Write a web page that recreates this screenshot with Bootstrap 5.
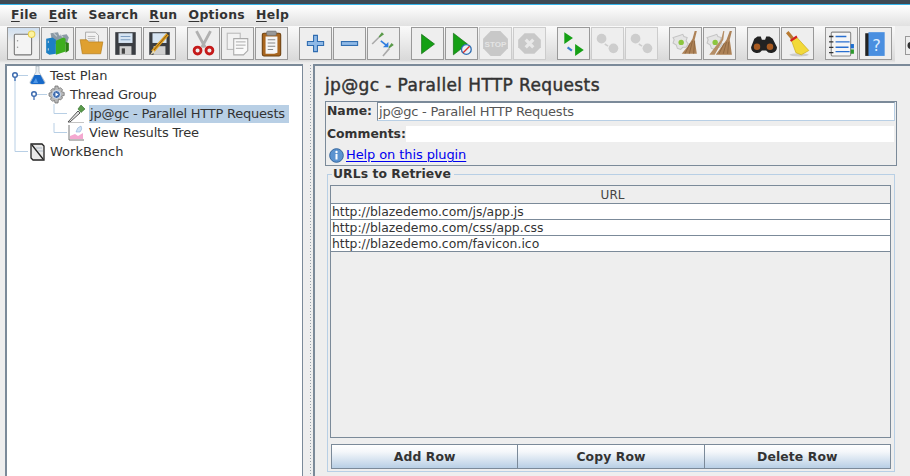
<!DOCTYPE html>
<html lang="en">
<head>
<meta charset="UTF-8">
<title>Apache JMeter</title>
<link href="https://cdn.jsdelivr.net/npm/bootstrap@5.3.0/dist/css/bootstrap.min.css" rel="stylesheet">
<style>
html, body { height: 476px; overflow: hidden; }
body { background: #eeeeee; color: #333; font-family: "DejaVu Sans", sans-serif; font-size: 13px; line-height: 1; }
.title-strip { height: 5px; background: #3f4a54; border-bottom: 1px solid #35b4ea; }
.menu-strip { height: 21px; padding-left: 11px; gap: 11.1px; background: linear-gradient(#ffffff, #e1e1e1); font-weight: 700; font-size: 12.4px; color: #333; letter-spacing: .3px; }
.menu-strip u { text-underline-offset: 2px; }
.tool-wrap { height: 37px; }
.tool-strip { height: 37px; width: 895px; padding: 1px 0 0 7px; background: linear-gradient(#fafafa, #d9d9d9 92%, #eeeeee); }
.tool-grp { gap: 1px; margin-right: 11px; }
.tool-btn { width: 33px; height: 33px; background: #eeeeee; border: 1px solid #999; }
.tool-btn.off { border-color: #ccc; }
.tool-btn.first { background: linear-gradient(#cfdff0, #eeeeee 45%); }
.tool-btn svg { width: 27px; height: 27px; display: block; }
.tool-peek { display: block; margin: 10px 0 0 10px; }
.work-area { height: 413px; padding-top: 1px; }
.tree-pane { width: 298px; margin-left: 5px; background: #fff; border: 2px solid #7b8a99; border-right-width: 1px; border-bottom: 0; color: #333; }
.tree-line { height: 19px; }
.tree-line svg { flex: none; display: block; }
.tree-line .tree-ico { width: 19px; height: 19px; }
.tree-text { margin-left: 3px; padding: 2px 3px 3px 0; white-space: nowrap; }
.tree-text.snug { letter-spacing: -.23px; margin-left: 4px; }
.tree-text.snug-left { letter-spacing: -.2px; margin-left: 3px; }
.tree-text.picked { background: #b8cfe5; padding-left: 1px; margin-left: 3px; padding-right: 4px; letter-spacing: -.23px; }
.split-bar { width: 10px; background-image: radial-gradient(#98a2ab 0.7px, transparent 0.9px); background-size: 3px 3px; background-position: 0 0; background-clip: content-box; padding: 0 1px 0 5px; }
.form-pane { flex: 1; background: #eeeeee; border-top: 2px solid #7b8a99; border-left: 2px solid #7b8a99; padding: 10px 13px 0 10px; }
.pane-title { font-size: 17px; font-weight: 400; -webkit-text-stroke: .45px #333; height: 19px; color: #333; letter-spacing: .37px; margin-bottom: 6px; line-height: 19px; }
.name-box { border: 1px solid #7b8a99; height: 65px; width: 572px; padding: 0 1px; }
.name-row { height: 19px; }
.lbl { font-weight: 700; font-size: 12.4px; color: #333; }
.name-lbl { width: 50px; }
.name-field { width: 518px; height: 19px; border: 1px solid #7b8a99; border-right-color: #b8cfe5; border-bottom-color: #b8cfe5; background: #fff; padding: 2px 1px; color: #555; letter-spacing: -.23px; }
.comment-row { height: 16px; margin-top: 5px; }
.comment-lbl { width: 79px; }
.comment-field { flex: 1; height: 16px; background: #fff; margin-right: 1px; }
.help-row { height: 18px; margin-top: 4px; gap: 2px; padding-left: 2px; }
.help-row a { color: #0000ee; text-underline-offset: 2px; letter-spacing: -.1px; margin-top: -1px; }
.url-set { width: 568px; height: 298px; margin: 8px 0 0 2px; border: 1px solid #b8cfe5; border-top: 0; padding: 0 3px 3px; }
.url-head { height: 11px; margin: 0 -4px; }
.url-head::before { content: ""; width: 5px; border-top: 1px solid #b8cfe5; align-self: flex-start; }
.url-head::after { content: ""; flex: 1; border-top: 1px solid #b8cfe5; align-self: flex-start; }
.url-head .lbl { padding: 0 3px 0 1px; margin-top: -6px; letter-spacing: .05px; }
.url-grid { width: 561px; height: 253px; border: 1px solid #7b8a99; background: #eeeeee; margin-left: -1px; }
.url-top { height: 18px; border-bottom: 1px solid #7b8a99; font-size: 12px; padding: 3px 0 0 4px; color: #444; }
.url-cell { height: 16px; background: #fff; border-bottom: 1px solid #7b8a99; padding: 2px 0 0 1px; font-size: 12.4px; color: #333; white-space: nowrap; }
.row-btns { margin: 6px 0 0 0; width: 560px; }
.row-btn { flex: 1; height: 25px; padding-top: 1px; border: 1px solid #7b8a99; border-right-width: 0; background: linear-gradient(#ffffff, #f4f7fa 30%, #b8cfe5); font-weight: 700; font-size: 12.4px; color: #333; letter-spacing: .1px; }
.row-btn:last-child { border-right-width: 1px; }
</style>
</head>
<body>
<div class="title-strip"></div>
<div class="menu-strip d-flex align-items-center">
    <span><u>F</u>ile</span><span><u>E</u>dit</span><span>Search</span><span><u>R</u>un</span><span><u>O</u>ptions</span><span><u>H</u>elp</span>
</div>
<div class="tool-wrap d-flex">
<div class="tool-strip d-flex">
    <div class="tool-grp d-flex">
        <div class="tool-btn first d-flex align-items-center justify-content-center"><svg viewBox="0 0 25 25"><rect x="4" y="4" width="16" height="19" rx="1" fill="#f4f4f4" stroke="#777"/><circle cx="20" cy="4" r="3" fill="#fdf3a0" stroke="#e8cf50"/><circle cx="7" cy="10" r=".7" fill="#999"/><circle cx="7" cy="16" r=".7" fill="#999"/></svg></div>
        <div class="tool-btn d-flex align-items-center justify-content-center"><svg viewBox="0 0 25 25"><path d="M6 3l7-1 1 3 7-1 2 3-2 6H8z" fill="#8c9aa5"/><path d="M9 3l3 3M15 4l3 3" stroke="#c5ccd2"/><path d="M2 8l6-1 3 2v13l-6 1-3-2z" fill="#1d7fc4"/><path d="M4 10v2M4 17v2" stroke="#bcd" /><path d="M11 10l7-3 2 1v12l-9 3z" fill="#3eae1e"/><path d="M20 11l3 1v7l-3 2z" fill="#2c7f15"/></svg></div>
        <div class="tool-btn d-flex align-items-center justify-content-center"><svg viewBox="0 0 25 25"><path d="M7 2h9l3 3v8H7z" fill="#f2f2f2" stroke="#999" stroke-width=".7"/><path d="M9 6h7M9 8h7M9 10h7" stroke="#aaa" stroke-width=".7"/><path d="M2 9h6l2 2h13l-2 11H4z" fill="#dfa030" stroke="#b27a18" stroke-width=".6"/></svg></div>
        <div class="tool-btn d-flex align-items-center justify-content-center"><svg viewBox="0 0 25 25"><path d="M3 2h19v21H3z" fill="#3a3d42"/><rect x="6" y="3" width="13" height="9" fill="#d6e4f2"/><path d="M8 6h9M8 9h9" stroke="#7c9cc0"/><rect x="7" y="15" width="11" height="8" fill="#d0d0d0"/><rect x="9" y="17" width="3" height="5" fill="#444"/></svg></div>
        <div class="tool-btn d-flex align-items-center justify-content-center"><svg viewBox="0 0 25 25"><path d="M3 2h19v21H3z" fill="#3a3d42"/><rect x="6" y="3" width="13" height="9" fill="#d6e4f2"/><rect x="7" y="15" width="11" height="8" fill="#d0d0d0"/><path d="M20 4L6 20" stroke="#e0a020" stroke-width="3"/><path d="M20 4L6 20" stroke="#7a4a10" stroke-width=".8"/><path d="M6.800 18.200l-3 5 4.600-2.400z" fill="#eadbb0"/></svg></div>
    </div>
    <div class="tool-grp d-flex">
        <div class="tool-btn d-flex align-items-center justify-content-center"><svg viewBox="0 0 25 25"><path d="M6 1l8 15M19 1l-8 15" stroke="#b0b0b0" stroke-width="2.600"/><circle cx="7" cy="19" r="3.200" fill="none" stroke="#c51a1a" stroke-width="2.600"/><circle cx="18" cy="19" r="3.200" fill="none" stroke="#c51a1a" stroke-width="2.600"/></svg></div>
        <div class="tool-btn d-flex align-items-center justify-content-center"><svg viewBox="0 0 25 25"><rect x="3" y="3" width="12" height="15" fill="#f2f2f2" stroke="#bbb"/><path d="M9 8h13v11l-4 4H9z" fill="#fafafa" stroke="#aaa"/><path d="M11 11h9M11 14h9M11 17h7" stroke="#bbb"/></svg></div>
        <div class="tool-btn d-flex align-items-center justify-content-center"><svg viewBox="0 0 25 25"><rect x="4" y="3" width="17" height="21" rx="1.500" fill="#a9661f" stroke="#6f4210"/><path d="M7 6h11v15l-3 1H7z" fill="#f6f6f6"/><rect x="8" y="1" width="9" height="4" rx="1" fill="#999" stroke="#666" stroke-width=".5"/><path d="M9 9h7M9 12h7M9 15h7M9 18h5" stroke="#888"/></svg></div>
    </div>
    <div class="tool-grp d-flex">
        <div class="tool-btn d-flex align-items-center justify-content-center"><svg viewBox="0 0 25 25"><path d="M10.700 5h3.600v5.700H20v3.600h-5.700V20h-3.600v-5.700H5v-3.600h5.700z" fill="#8fb9e6" stroke="#2f6cb0"/></svg></div>
        <div class="tool-btn d-flex align-items-center justify-content-center"><svg viewBox="0 0 25 25"><rect x="5" y="10.700" width="15" height="3.600" fill="#8fb9e6" stroke="#2f6cb0"/></svg></div>
        <div class="tool-btn d-flex align-items-center justify-content-center"><svg viewBox="0 0 25 25"><path d="M2 13l7-7M12 24l6-7" stroke="#aaa" stroke-width="1.500"/><path d="M8 6l3-4 2 2-4 3zM17 16l3-4 2 2-4 3z" fill="#5a9a4a"/><path d="M10 10l5 4" stroke="#2e7de0" stroke-width="1.500"/><path d="M17 11v5h-5z" fill="#2e7de0"/></svg></div>
    </div>
    <div class="tool-grp d-flex">
        <div class="tool-btn d-flex align-items-center justify-content-center"><svg viewBox="0 0 25 25"><path d="M7 4l12 9-12 9z" fill="#15a015" stroke="#0c6a0c" stroke-width=".6"/></svg></div>
        <div class="tool-btn d-flex align-items-center justify-content-center"><svg viewBox="0 0 25 25"><path d="M5 3l13 10L5 23z" fill="#15a015" stroke="#0c6a0c" stroke-width=".6"/><circle cx="17" cy="18" r="4.500" fill="#e8f0fa" stroke="#2f6cb0" stroke-width="1.200"/><path d="M14 21l6-6" stroke="#d8302a" stroke-width="1.200"/></svg></div>
        <div class="tool-btn off d-flex align-items-center justify-content-center"><svg viewBox="0 0 25 25"><path d="M8 1h9l7 7v9l-7 7H8l-7-7V8z" fill="#c8c8c8"/><text x="12.500" y="15.500" font-size="7.500" font-weight="700" fill="#e4e4e4" text-anchor="middle" font-family="Liberation Sans, sans-serif">STOP</text></svg></div>
        <div class="tool-btn off d-flex align-items-center justify-content-center"><svg viewBox="0 0 25 25"><path d="M8 3h9l6 6v7l-6 6H8l-6-6V9z" fill="#c8c8c8"/><path d="M9 9l7 7M16 9l-7 7" stroke="#e8e8e8" stroke-width="3"/></svg></div>
    </div>
    <div class="tool-grp d-flex">
        <div class="tool-btn d-flex align-items-center justify-content-center"><svg viewBox="0 0 25 25"><path d="M4 2l8 5.500L4 13z" fill="#15a015"/><path d="M14 13l8 5.500-8 5.500z" fill="#15a015"/><path d="M7 16l4 3" stroke="#3a7fd0" stroke-width="2"/></svg></div>
        <div class="tool-btn off d-flex align-items-center justify-content-center"><svg viewBox="0 0 25 25"><circle cx="7" cy="8" r="4.500" fill="#cdcdcd"/><circle cx="18" cy="17" r="4.500" fill="#cdcdcd"/><path d="M10 13l3 2" stroke="#cdcdcd" stroke-width="1.500"/></svg></div>
        <div class="tool-btn off d-flex align-items-center justify-content-center"><svg viewBox="0 0 25 25"><circle cx="7" cy="8" r="4.500" fill="#cdcdcd"/><circle cx="18" cy="17" r="4.500" fill="#cdcdcd"/><path d="M10 13l3 2" stroke="#cdcdcd" stroke-width="1.500"/></svg></div>
    </div>
    <div class="tool-grp d-flex">
        <div class="tool-btn d-flex align-items-center justify-content-center"><svg viewBox="0 0 25 25"><path d="M7 5l3-1 1 2 3 1-1 3 2 3-2 3-3 0-2 2-3-1-1-3-3-2 1-3-1-2z" fill="#e4e4e4" stroke="#c4c4c4"/><circle cx="8.500" cy="11.500" r="2.500" fill="#8cc63f"/><path d="M23 1l-2 8 2 13H9l5-6 5-8 2-7z" fill="#ad8257"/><path d="M19 10l-3 12M21 10l-1 12M17 12l-5 10" stroke="#7f5a35" stroke-width=".6"/></svg></div>
        <div class="tool-btn d-flex align-items-center justify-content-center"><svg viewBox="0 0 25 25"><path d="M7 5l3-1 1 2 3 1-1 3 2 3-2 3-3 0-2 2-3-1-1-3-3-2 1-3-1-2z" fill="#e4e4e4" stroke="#c4c4c4"/><circle cx="8.500" cy="11.500" r="2.500" fill="#8cc63f"/><path d="M17 1l-1 8 -8 14H3l6-8 5-6 2-8z" fill="#b58e66"/><path d="M24 1l-2 8 2 14H9l5-7 5-7 3-8z" fill="#ad8257"/><path d="M19 11l-3 11M21 11l-1 11M17 12l-5 10" stroke="#7f5a35" stroke-width=".6"/></svg></div>
    </div>
    <div class="tool-grp d-flex">
        <div class="tool-btn d-flex align-items-center justify-content-center"><svg viewBox="0 0 25 25"><path d="M4 8l3-2h3l1 3h3l1-3h3l3 2 4 8a5.500 5.500 0 0 1-10 3h-4a5.500 5.500 0 0 1-10-3z" fill="#222"/><circle cx="6.500" cy="15.500" r="3" fill="#a85a20"/><circle cx="18.500" cy="15.500" r="3" fill="#a85a20"/></svg></div>
        <div class="tool-btn d-flex align-items-center justify-content-center"><svg viewBox="0 0 25 25"><ellipse cx="14" cy="23" rx="9" ry="1.500" fill="#ccc"/><path d="M3 2l5 6" stroke="#b87a30" stroke-width="3"/><path d="M7 10l5-3 11 12-7 4-5-2z" fill="#f2d93a" stroke="#c8a818" stroke-width=".6"/><path d="M6 10l6-4" stroke="#d42020" stroke-width="2"/></svg></div>
    </div>
    <div class="tool-grp d-flex me-0">
        <div class="tool-btn d-flex align-items-center justify-content-center"><svg viewBox="0 0 25 25"><rect x="3" y="2" width="18" height="22" rx="1" fill="#f6f6f6" stroke="#888"/><path d="M1 6h4M1 11h4M1 16h4M1 21h4" stroke="#333" stroke-width="1.200"/><path d="M7 6h10M7 11h13M7 16h12M7 20h13" stroke="#2a6fd0" stroke-width="1.300"/><rect x="21" y="13" width="3" height="4" fill="#1d6fd0"/><rect x="21" y="18" width="3" height="4" fill="#2c9a2c"/></svg></div>
        <div class="tool-btn d-flex align-items-center justify-content-center"><svg viewBox="0 0 25 25"><path d="M3 3h4v21H3z" fill="#222"/><path d="M6 2h15v22H6z" fill="#4a8fe0"/><text x="13.500" y="19" font-size="15" fill="#dfeeff" text-anchor="middle" font-family="DejaVu Sans, sans-serif">?</text></svg></div>
    </div>
</div>
<svg class="tool-peek" width="5" height="19"><rect x=".5" y=".5" width="6" height="18" fill="#eee" stroke="#999"/><circle cx="6" cy="9.500" r="3.500" fill="#333"/></svg>
</div>
<div class="work-area d-flex">
    <div class="tree-pane">
        <div class="tree-line d-flex align-items-center">
            <svg width="21" height="19"><path d="M8 9.500h13M8 9.500V19" stroke="#b8cfe5"/><path d="M8 11v4" stroke="#3f6db0" stroke-width="1.300"/><circle cx="8" cy="9" r="2.300" fill="#fff" stroke="#3f6db0" stroke-width="1.500"/></svg>
            <svg class="tree-ico" viewBox="0 0 19 19"><path d="M8 0h3v6l6 10q.500 2-2 2H4q-2.500 0-2-2l6-10z" fill="#e6ebf0" stroke="#98a4b0" stroke-width=".6"/><path d="M6.500 9h6l4 7.500q0 1.500-2 1.500H4.500q-2 0-2-1.500z" fill="#1769c9"/><path d="M8 12l2 5H5z" fill="#4f97e6"/></svg>
            <span class="tree-text">Test Plan</span>
        </div>
        <div class="tree-line d-flex align-items-center">
            <svg width="40" height="19"><path d="M8 0v19M27 9.500h13" stroke="#b8cfe5"/><path d="M27 11v4" stroke="#3f6db0" stroke-width="1.300"/><circle cx="27" cy="9" r="2.300" fill="#fff" stroke="#3f6db0" stroke-width="1.500"/></svg>
            <svg class="tree-ico" viewBox="0 0 19 19"><path d="M8 1h3l.500 2.500 2-.800 2 2-.800 2 2.500.800v3l-2.500.500.800 2-2 2-2-.800L11 18H8l-.500-2.500-2 .800-2-2 .800-2L2 11V8l2.500-.500-.800-2 2-2 2 .800z" fill="#b8b8b8" stroke="#666" stroke-width=".7"/><circle cx="9.500" cy="9.500" r="4" fill="#3f6db0" stroke="#dfe8f2"/><path d="M8.500 7.500l3 2-3 2z" fill="#fff"/></svg>
            <span class="tree-text snug">Thread Group</span>
        </div>
        <div class="tree-line d-flex align-items-center">
            <svg width="60" height="19"><path d="M8 0v19M47 0v9.500h13" stroke="#b8cfe5" fill="none"/></svg>
            <svg class="tree-ico" viewBox="0 0 19 19"><path d="M1 18l10-11 2 2L3 18z" fill="#e4e4e4" stroke="#444" stroke-width=".9"/><path d="M11 5l3-4 4 4-4 3.500z" fill="#5a9a4a" stroke="#2e6a2a" stroke-width=".6"/><path d="M3 18.500h14" stroke="#c4c4c4"/></svg>
            <span class="tree-text picked">jp@gc - Parallel HTTP Requests</span>
        </div>
        <div class="tree-line d-flex align-items-center">
            <svg width="60" height="19"><path d="M8 0v19M47 0v9.500h13" stroke="#b8cfe5" fill="none"/></svg>
            <svg class="tree-ico" viewBox="0 0 19 19"><path d="M2 2v15h15" fill="none" stroke="#777"/><path d="M3 16v-3l5-2 3 2 5-3v6z" fill="#f4a8d0"/><path d="M9 9q1-5 5-6 2 3-1 6z" fill="#cfe2f5" stroke="#8fb0d8" stroke-width=".6"/></svg>
            <span class="tree-text snug-left">View Results Tree</span>
        </div>
        <div class="tree-line d-flex align-items-center">
            <svg width="21" height="19"><path d="M8 0v9.500h13" stroke="#b8cfe5" fill="none"/></svg>
            <svg class="tree-ico" viewBox="0 0 19 19"><path d="M3 2h11l2 2v14H5l-2-2z" fill="#e8e8e8" stroke="#222" stroke-width="1.300"/><path d="M4 3l11 14" stroke="#222" stroke-width="1.300"/><path d="M8 6h6M10 9h5" stroke="#9ab" stroke-width=".7"/></svg>
            <span class="tree-text">WorkBench</span>
        </div>
    </div>
    <div class="split-bar"></div>
    <div class="form-pane">
        <div class="pane-title">jp@gc - Parallel HTTP Requests</div>
        <div class="name-box">
            <div class="name-row d-flex align-items-center">
                <span class="lbl name-lbl">Name:</span>
                <div class="name-field">jp@gc - Parallel HTTP Requests</div>
            </div>
            <div class="comment-row d-flex align-items-center">
                <span class="lbl comment-lbl">Comments:</span>
                <div class="comment-field"></div>
            </div>
            <div class="help-row d-flex align-items-center">
                <svg width="15" height="15" viewBox="0 0 15 15"><circle cx="7.500" cy="7.500" r="6.800" fill="#5b93d0" stroke="#34669e"/><circle cx="7.500" cy="4" r="1.200" fill="#fff"/><rect x="6.500" y="6" width="2" height="5.500" fill="#fff"/></svg>
                <a href="#">Help on this plugin</a>
            </div>
        </div>
        <div class="url-set">
            <div class="url-head d-flex"><span class="lbl">URLs to Retrieve</span></div>
            <div class="url-grid">
                <div class="url-top text-center">URL</div>
                <div class="url-cell">http://blazedemo.com/js/app.js</div>
                <div class="url-cell">http://blazedemo.com/css/app.css</div>
                <div class="url-cell">http://blazedemo.com/favicon.ico</div>
            </div>
            <div class="row-btns d-flex">
                <div class="row-btn d-flex align-items-center justify-content-center">Add Row</div>
                <div class="row-btn d-flex align-items-center justify-content-center">Copy Row</div>
                <div class="row-btn d-flex align-items-center justify-content-center">Delete Row</div>
            </div>
        </div>
    </div>
</div>
<script src="https://cdn.jsdelivr.net/npm/bootstrap@5.3.0/dist/js/bootstrap.bundle.min.js"></script>
</body>
</html>
